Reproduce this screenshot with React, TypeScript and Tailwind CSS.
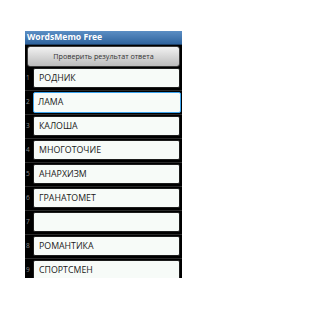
const words = ['РОДНИК', 'ЛАМА', 'КАЛОША', 'МНОГОТОЧИЕ', 'АНАРХИЗМ', 'ГРАНАТОМЕТ', '', 'РОМАНТИКА', 'СПОРТСМЕН'];

function Row({ n, word, focused }: { n: number; word: string; focused?: boolean }) {
  return (
    <div className="flex h-[24px] items-center border-b border-[#2a2a2a]">
      <div className="w-[8px] pl-[1px] text-[6.5px] leading-none text-[#8a8a8a]">{n}</div>
      <div
        className={
          focused
            ? 'flex h-[21px] w-[148px] items-center rounded-[2px] border-[1.5px] border-[#3aa3ee] bg-[#f7fbf8] pl-[4px] text-[8.8px] text-[#1a1a1a]'
            : 'flex h-[20px] w-[147px] items-center rounded-[2px] border border-[#1c1c1c] bg-[#f7fbf8] pl-[5px] text-[8.8px] text-[#1a1a1a]'
        }
      >
        {word}
      </div>
    </div>
  );
}

export default function App() {
  return (
    <div className="h-[310px] w-[207px] bg-white pl-[25px] pt-[31px] font-['Open_Sans',sans-serif]">
      <div className="flex h-[247px] w-[157px] flex-col overflow-hidden bg-black">
        <div className="flex h-[14px] items-center border-b border-[#1d3f66] bg-gradient-to-b from-[#5b8ec4] to-[#2f649e] pl-[2px] text-[8.6px] font-bold text-white">
          WordsMemo Free
        </div>
        <div className="px-[2px] pt-[1px]">
          <div className="flex h-[21px] items-center justify-center rounded-[3px] border border-[#3a3a3a] bg-gradient-to-b from-[#f2f2f2] to-[#bcbcbc] text-[7.2px] text-[#333]">
            Проверить результат ответа
          </div>
        </div>
        <div className="flex flex-col">
          {words.map((w, i) => (
            <Row key={i} n={i + 1} word={w} focused={i === 1} />
          ))}
        </div>
      </div>
    </div>
  );
}
